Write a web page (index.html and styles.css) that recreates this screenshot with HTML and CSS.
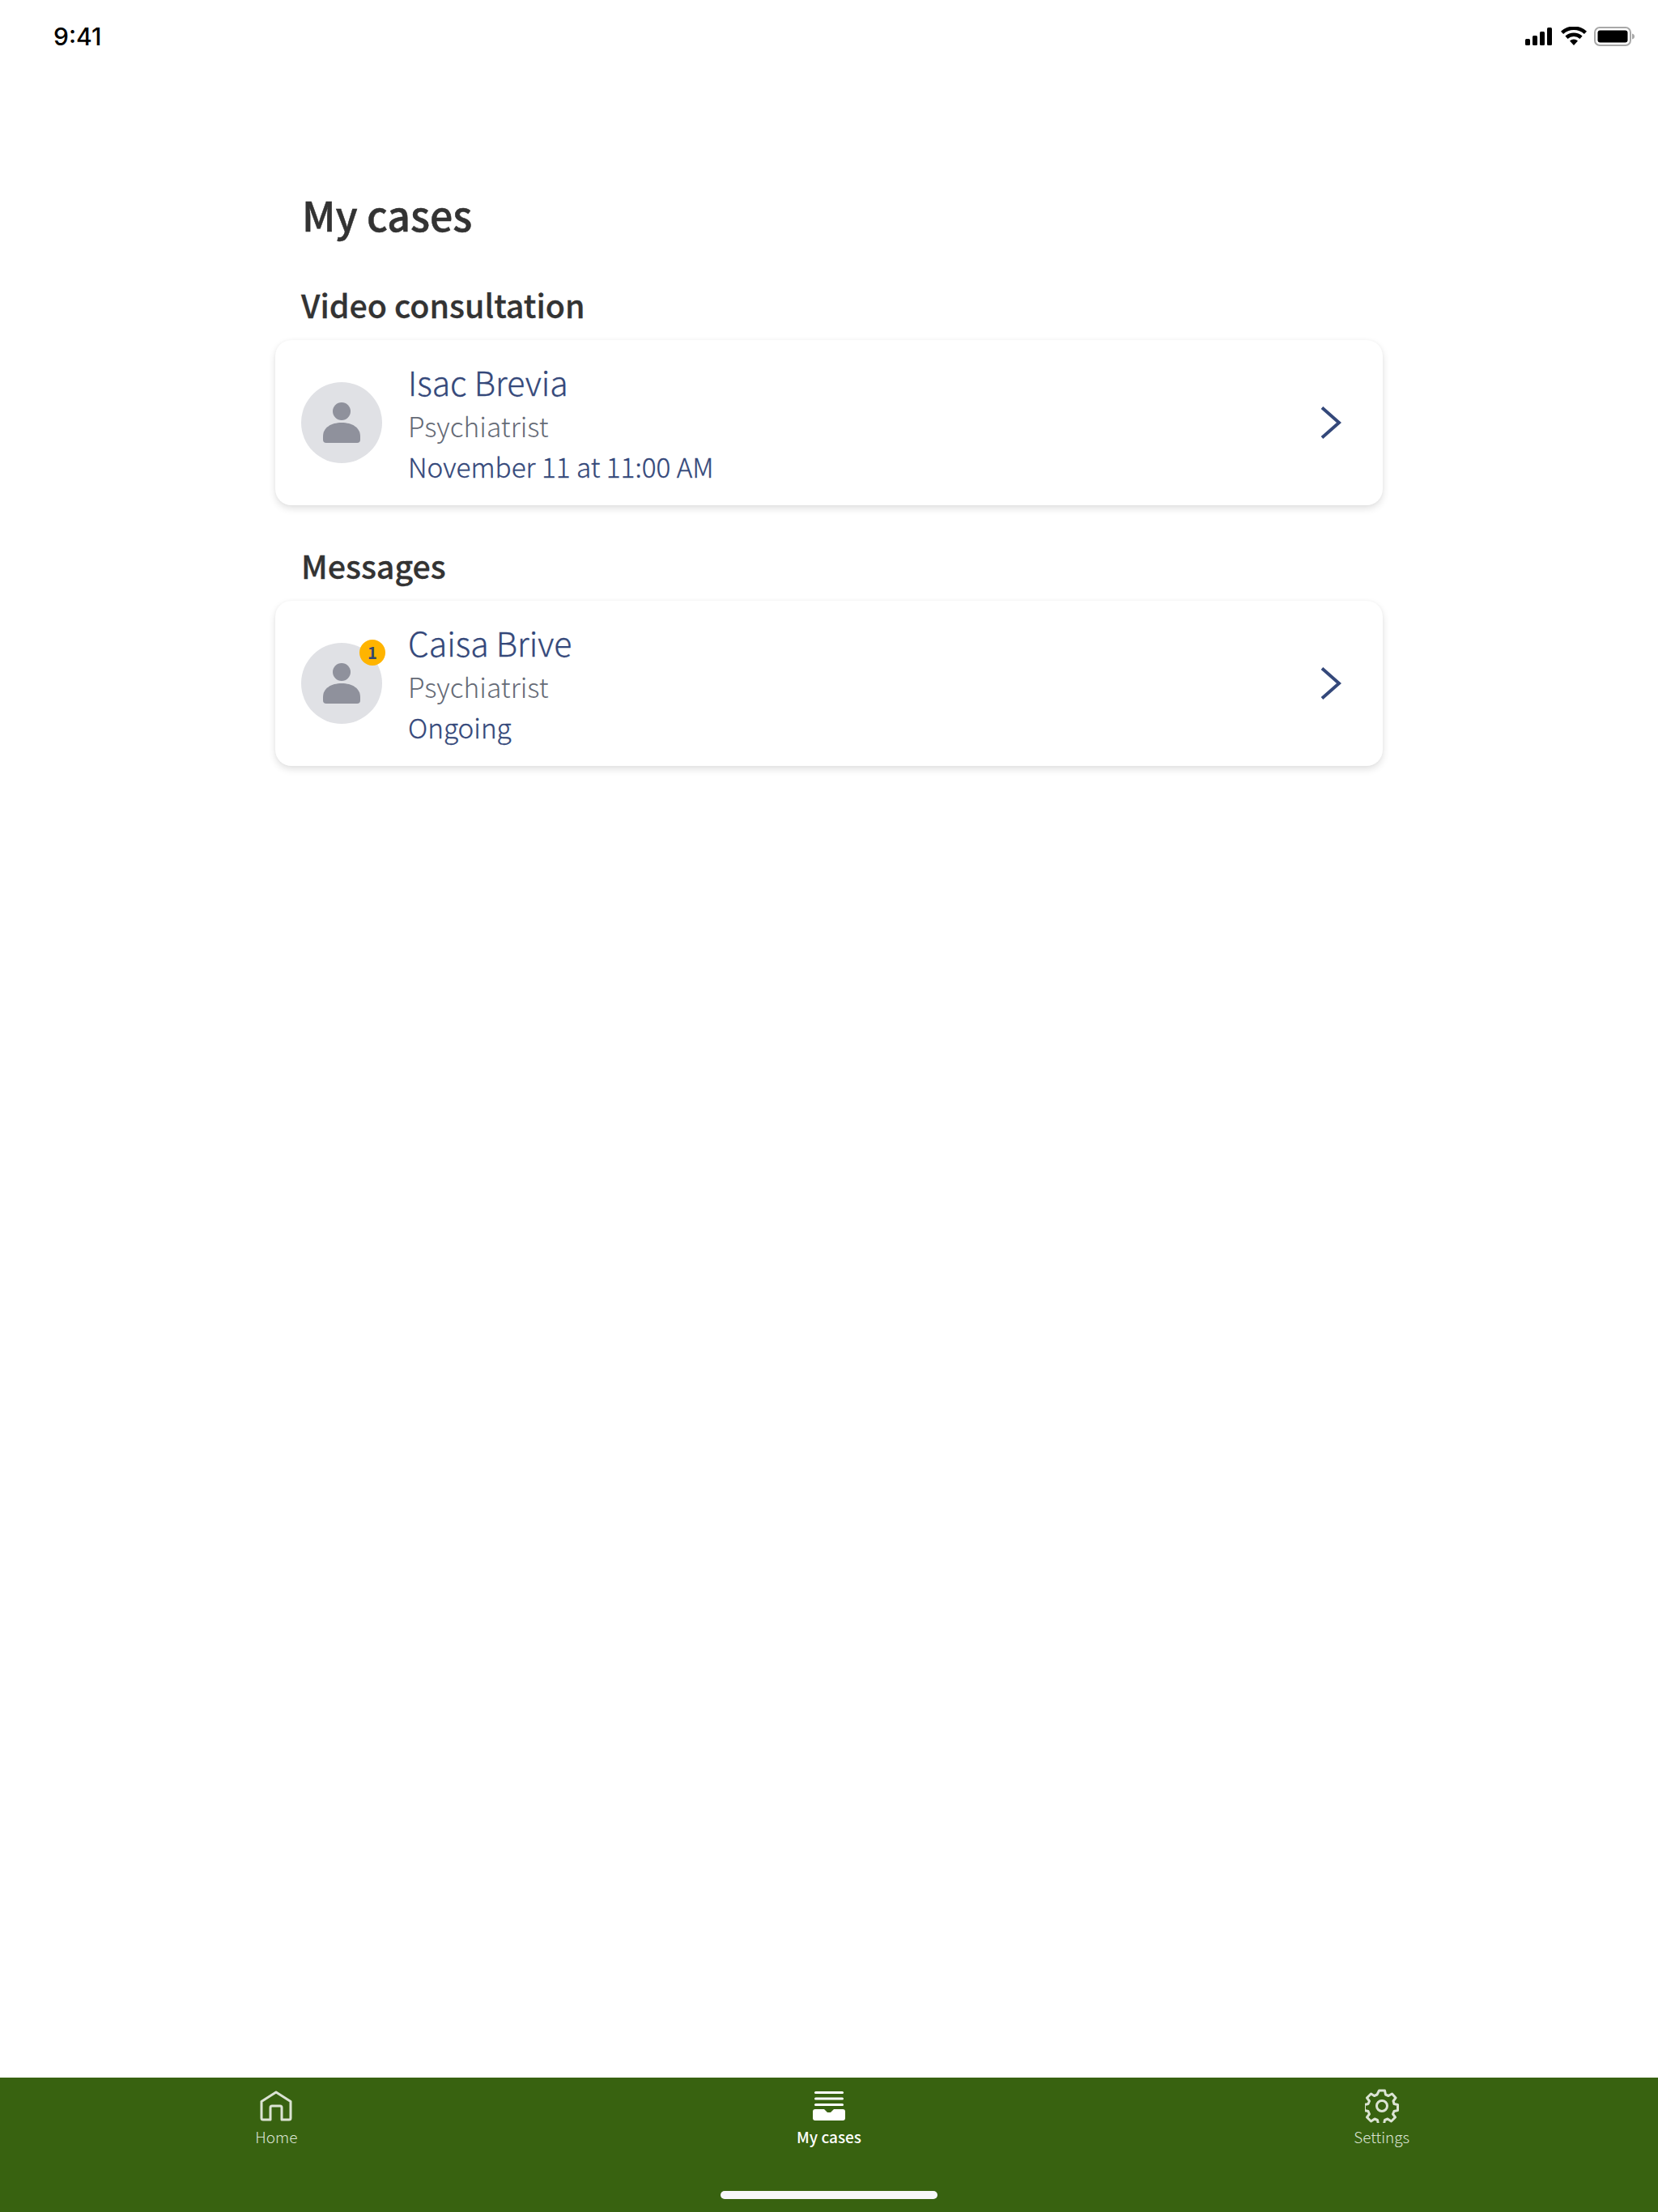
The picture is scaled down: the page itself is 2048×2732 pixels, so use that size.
FILE: index.html
```html
<!DOCTYPE html>
<html lang="en">
<head>
  <meta charset="UTF-8">
  <meta name="viewport" content="width=device-width, initial-scale=1.0">
  <title>My cases</title>
  <link rel="stylesheet" href="styles.css">
</head>
<body>
  <div class="status-bar">
    <span class="status-time">9:41</span>
    <div class="status-icons">
      <svg width="36" height="22" viewBox="0 0 36 22"><rect x="1" y="14" width="6" height="8" rx="1.5"/><rect x="10" y="10" width="6" height="12" rx="1.5"/><rect x="19" y="5" width="6" height="17" rx="1.5"/><rect x="28" y="0" width="6" height="22" rx="1.5"/></svg>
      <svg width="32" height="24" viewBox="0 0 32 24"><path d="M16 23l-5-5.5a7.2 7.2 0 0 1 10 0zM8.5 15L5.4 11.6a15.5 15.5 0 0 1 21.2 0L23.500 15a11 11 0 0 0-15 0zM3.100 9.100L0 5.700a23.500 23.500 0 0 1 32 0l-3.100 3.400a19 19 0 0 0-25.800 0z"/></svg>
      <svg width="50" height="24" viewBox="0 0 50 24"><rect x="1" y="1" width="44" height="22" rx="6" fill="none" stroke="#a8a8a8" stroke-width="2"/><rect x="4.500" y="4.500" width="37" height="15" rx="3"/><path d="M47 8.500c2 .5 3 1.800 3 3.500s-1 3-3 3.500z" fill="#a8a8a8"/></svg>
    </div>
  </div>

  <main class="content">
    <h1 class="page-title">My cases</h1>

    <h2 class="section-title">Video consultation</h2>
    <div class="case-card">
      <div class="avatar">
        <svg width="46" height="50" viewBox="0 0 46 50"><circle cx="23" cy="11" r="11"/><path d="M0 42c0-11 10-17 23-17s23 6 23 17v4a4 4 0 0 1-4 4H4a4 4 0 0 1-4-4z"/></svg>
      </div>
      <div class="case-info">
        <span class="case-name">Isac Brevia</span>
        <span class="case-role">Psychiatrist</span>
        <span class="case-detail">November 11 at 11:00 AM</span>
      </div>
      <svg class="chevron" width="26" height="40" viewBox="0 0 26 40"><path d="M2 1.500L23 20 2 38.500"/></svg>
    </div>

    <h2 class="section-title section-messages">Messages</h2>
    <div class="case-card">
      <div class="avatar">
        <svg width="46" height="50" viewBox="0 0 46 50"><circle cx="23" cy="11" r="11"/><path d="M0 42c0-11 10-17 23-17s23 6 23 17v4a4 4 0 0 1-4 4H4a4 4 0 0 1-4-4z"/></svg>
        <span class="badge">1</span>
      </div>
      <div class="case-info">
        <span class="case-name">Caisa Brive</span>
        <span class="case-role">Psychiatrist</span>
        <span class="case-detail">Ongoing</span>
      </div>
      <svg class="chevron" width="26" height="40" viewBox="0 0 26 40"><path d="M2 1.500L23 20 2 38.500"/></svg>
    </div>
  </main>

  <nav class="tab-bar">
    <div class="tab">
      <svg width="40" height="38" viewBox="0 0 40 38" fill="none" stroke="currentColor" stroke-width="3" stroke-linejoin="round"><path d="M2 13.500L20 2l18 11.500V34a2 2 0 0 1-2 2H27V21a2 2 0 0 0-2-2H15a2 2 0 0 0-2 2v15H4a2 2 0 0 1-2-2z"/></svg>
      <span>Home</span>
    </div>
    <div class="tab tab-active">
      <svg width="40" height="36" viewBox="0 0 40 36" fill="currentColor"><rect x="2" y="0" width="36" height="3" rx="1.500"/><rect x="2" y="7.500" width="36" height="3" rx="1.500"/><rect x="2" y="15" width="36" height="3" rx="1.500"/><path d="M3 22h11l4 4h4l4-4h11a3 3 0 0 1 3 3v8a3 3 0 0 1-3 3H3a3 3 0 0 1-3-3v-8a3 3 0 0 1 3-3z"/></svg>
      <span>My cases</span>
    </div>
    <div class="tab">
      <svg width="42" height="42" viewBox="0 0 42 42" fill="none" stroke="currentColor" stroke-width="3" stroke-linejoin="round"><circle cx="21" cy="21" r="6.500"/><path d="M17.500 2h7l1 5 3.500 1.500 4.500-2.500 4.500 5-3 4 1 3.500 4.500 1v7l-4.500 1-1.500 3.500 3 4-5 5-4.500-3-3.500 1.500-1 5h-7l-1-5-3.500-1.500-4.500 3-5-5 3-4-1.500-3.500-4.500-1v-7l4.500-1 1.500-3.500-3-4 5-5 4 2.500 3.500-1.500z"/></svg>
      <span>Settings</span>
    </div>
    <div class="home-indicator"></div>
  </nav>
</body>
</html>
```

FILE: styles.css
```css
/* Page */
html, body {
  margin: 0;
  padding: 0;
}
body {
  position: relative;
  display: flex;
  flex-direction: column;
  width: 2048px;
  height: 2732px;
  overflow: hidden;
  background: #fff;
  font-family: "Noto Sans CJK SC", "Noto Sans", sans-serif;
  color: #333;
}

/* Status bar */
.status-bar {
  display: flex;
  align-items: center;
  justify-content: space-between;
  height: 90px;
  padding: 0 29px 0 66px;
}
.status-time {
  font-family: Inter, "Liberation Sans", sans-serif;
  font-size: 30px;
  font-weight: 500;
  color: #000;
}
.status-icons {
  display: flex;
  align-items: center;
  gap: 9px;
}
.status-icons svg {
  display: block;
}

/* Main content */
.content {
  flex: 1;
  padding: 0 340px;
}
.page-title {
  margin: 136px 0 0 33px;
  font-size: 50px;
  line-height: 76px;
  font-weight: 500;
  -webkit-text-stroke: 0.5px #333;
}
.section-title {
  margin: 44px 0 14px 32px;
  font-size: 39.4px;
  line-height: 60px;
  font-weight: 500;
  -webkit-text-stroke: 0.3px #333;
}
.section-messages {
  margin-top: 44px;
}

/* Cards */
.case-card {
  display: flex;
  align-items: center;
  height: 204px;
  padding: 0 51px 0 32px;
  border-radius: 20px;
  background: #fff;
  box-shadow: 0 4px 10px rgba(0, 0, 0, 0.12), 0 0 4px rgba(0, 0, 0, 0.03);
}
.avatar {
  position: relative;
  display: flex;
  align-items: center;
  justify-content: center;
  flex-shrink: 0;
  width: 100px;
  height: 100px;
  border-radius: 50%;
  background: #e0e1e5;
}
.avatar svg {
  fill: #8f919c;
}
.badge {
  position: absolute;
  top: -4px;
  right: -4px;
  width: 32px;
  height: 32px;
  border-radius: 50%;
  background: #ffb400;
  color: #36456f;
  font-size: 20px;
  font-weight: 700;
  line-height: 32px;
  text-align: center;
}
.case-info {
  display: flex;
  flex: 1;
  flex-direction: column;
  margin-left: 32px;
}
.case-name {
  font-size: 41px;
  line-height: 56px;
  font-weight: 300;
  color: #34487a;
  -webkit-text-stroke: 0.3px #34487a;
}
.case-role {
  margin-top: 2px;
  font-size: 33.6px;
  line-height: 50px;
  font-weight: 300;
  color: #656a76;
}
.case-detail {
  font-size: 33.300px;
  line-height: 50px;
  font-weight: 300;
  color: #34487a;
  -webkit-text-stroke: 0.3px #34487a;
}
.chevron {
  fill: none;
  stroke: #34487a;
  stroke-width: 4;
}

/* Tab bar */
.tab-bar {
  position: relative;
  display: grid;
  grid-template-columns: repeat(3, 1fr);
  height: 166px;
  background: #386210;
}
.tab {
  display: flex;
  flex-direction: column;
  align-items: center;
  padding-top: 14px;
  color: #dbe3d3;
  font-size: 19px;
  line-height: 30px;
  font-weight: 300;
}
.tab svg {
  display: block;
  height: 42px;
  margin-bottom: 2px;
}
.tab-active {
  color: #fff;
  font-weight: 500;
}
.home-indicator {
  position: absolute;
  left: 890px;
  bottom: 16px;
  width: 268px;
  height: 10px;
  border-radius: 5px;
  background: #f7f7fa;
}
```
